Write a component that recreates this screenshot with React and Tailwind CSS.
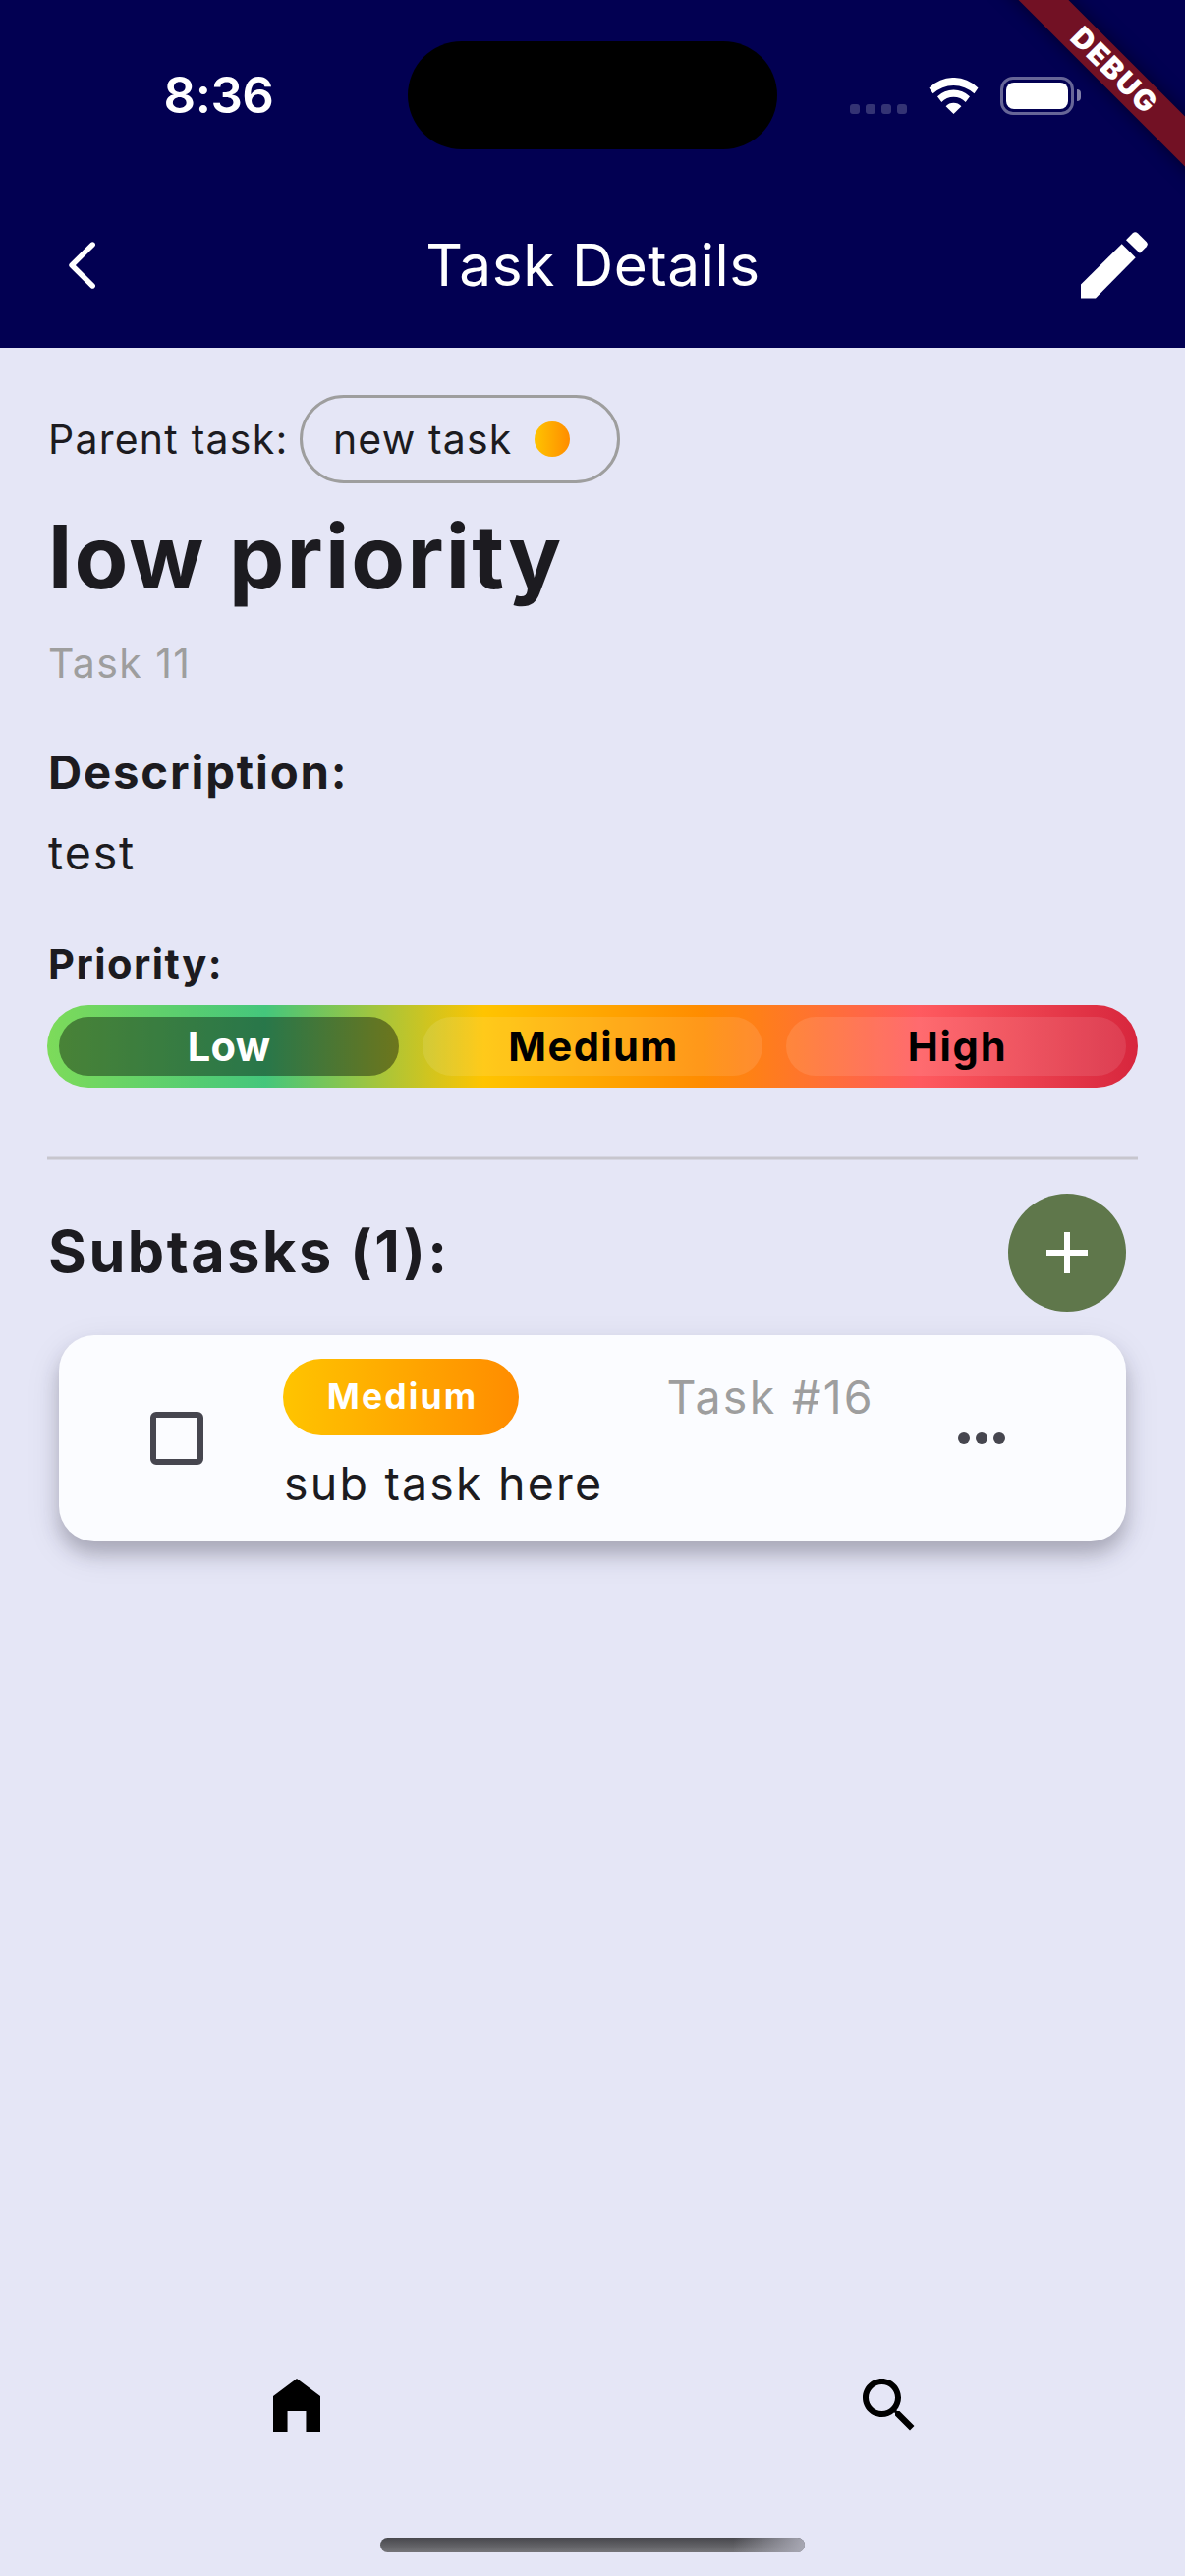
import React from "react";

function StatusBar() {
  return (
    <div className="flex h-[194px] items-center text-white">
      <div className="w-[415px] pl-[30px] text-center text-[51px] leading-[60px] font-semibold tracking-[-0.5px]">
        8:36
      </div>
      <div className="h-[110px] w-[376px] rounded-full bg-black" />
      <div className="ml-[74px] mt-7 flex gap-1.5">
        {[0, 1, 2, 3].map((i) => (
          <span key={i} className="size-2.5 rounded-[3px] bg-white/20" />
        ))}
      </div>
      <svg className="ml-[22px] h-[37px] w-[51px]" viewBox="0 0 50.4 37" fill="currentColor">
        <path d="M0.2 10.4A35.2 35.2 0 0 1 50.2 10.4L46.2 16.2A31 31 0 0 0 4.2 16.2Z" />
        <path d="M8.7 19.2A23.9 23.9 0 0 1 41.7 19.2L37.4 25A16.7 16.7 0 0 0 13 25Z" />
        <path d="M17.3 29.2A10.7 10.7 0 0 1 33.1 29.2L25.2 37Z" />
      </svg>
      <div className="ml-[22px] flex items-center gap-[3px]">
        <div className="h-[39px] w-[75px] rounded-[13px] border-[3px] border-white/40 p-[3px]">
          <div className="h-full w-full rounded-[8px] bg-white" />
        </div>
        <div className="h-3 w-1 rounded-r-full bg-white/50" />
      </div>
    </div>
  );
}

function DebugRibbon() {
  return (
    <div className="absolute top-0 right-0 size-[220px] overflow-hidden">
      <div className="absolute top-[54px] left-[-52px] flex h-9 w-[400px] rotate-45 items-center justify-center bg-[#721124] text-[29.5px] leading-none font-black tracking-[1.6px] text-white shadow-[0_0_18px_rgba(0,0,0,0.5)]">
        DEBUG
      </div>
    </div>
  );
}

function Header() {
  return (
    <header className="h-[354px] bg-[#020052]">
      <StatusBar />
      <div className="flex h-[152px] items-center justify-between pr-[38px] pl-[70px] text-white">
        <svg className="mr-[10px] h-[48px] w-[27px]" viewBox="0 0 27 48" fill="none" stroke="currentColor" strokeWidth="5.4" strokeLinecap="round" strokeLinejoin="round">
          <path d="M24.2 3L3 24L24.2 45" />
        </svg>
        <h1 className="text-[58.5px] leading-[72px] tracking-[0.57px]">Task Details</h1>
        <svg className="h-[68px] w-[68px]" viewBox="0 0 68 68" fill="currentColor">
          <path d="M0 53.5L41.7 12.2L55.7 26.2L15 67.5H0Z" />
          <path d="M46 8.2L52.6 1.5Q55.3 -1 58 1.5L66.6 10Q69 12.6 66.6 15.2L60 21.8Z" />
        </svg>
      </div>
    </header>
  );
}

function PriorityBar() {
  return (
    <div className="mt-[17px] grid h-[84px] grid-cols-3 gap-6 rounded-full bg-[linear-gradient(90deg,#7ddb5a_0%,#44c67c_20%,#ffc400_40%,#ff8c00_60%,#ff5a5f_80%,#d7263d_100%)] p-3 text-center text-[41.6px] leading-[60px] font-bold text-black">
      <div className="rounded-full bg-black/40 tracking-[0.3px] text-white">Low</div>
      <div className="rounded-full bg-white/10 pl-[2px] tracking-[1.4px]">Medium</div>
      <div className="rounded-full bg-white/10 pl-[3px] tracking-[1.8px]">High</div>
    </div>
  );
}

function SubtaskCard() {
  return (
    <div className="mx-3 mt-6 flex h-[210px] items-center rounded-[36px] bg-[#fbfcff] pl-[93px] shadow-[0_13px_18px_rgba(50,45,60,0.26),0_12px_36px_rgba(50,45,60,0.11)]">
      <div className="size-[54px] rounded-[6px] border-[6px] border-[#46464f]" />
      <div className="ml-[81px] h-full w-[602px] pt-6">
        <div className="flex h-[78px] items-center justify-between">
          <span className="flex h-full w-[240px] items-center justify-center rounded-full bg-[linear-gradient(90deg,#ffc400,#ff8c00)] pb-px pl-[3px] text-[35.5px] leading-[48px] font-bold tracking-[2.1px] text-white">
            Medium
          </span>
          <span className="text-[46.5px] leading-[58px] tracking-[2.3px] text-[#9e9e9e]">Task #16</span>
        </div>
        <div className="mt-5 pl-px text-[46.5px] leading-[58px] tracking-[2.2px]">sub task here</div>
      </div>
      <div className="ml-[85px] flex gap-1.5">
        {[0, 1, 2].map((i) => (
          <span key={i} className="size-3 rounded-full bg-[#46464f]" />
        ))}
      </div>
    </div>
  );
}

function BottomNav() {
  return (
    <nav className="mt-auto grid grid-cols-2 pb-[99px] text-black">
      <svg className="mx-auto size-[72px]" viewBox="0 0 24 24" fill="currentColor">
        <path d="M4 21V9L12 3L20 9V21H15.15V14H8.85V21Z" />
      </svg>
      <svg className="mx-auto size-[72px]" viewBox="0 0 24 24" fill="currentColor">
        <path d="M15.5 14h-.79l-.28-.27C15.41 12.59 16 11.11 16 9.5 16 5.91 13.09 3 9.5 3S3 5.91 3 9.5 5.91 16 9.5 16c1.61 0 3.09-.59 4.23-1.57l.27.28v.79l5 4.99L20.49 19l-4.99-5zm-6 0C7.01 14 5 11.99 5 9.5S7.01 5 9.5 5 14 7.01 14 9.5 11.99 14 9.5 14z" />
      </svg>
    </nav>
  );
}

export default function App() {
  return (
    <div className="relative flex h-[2622px] w-[1206px] flex-col overflow-hidden bg-[#e5e6f6] font-['Inter',sans-serif] text-[#1c1b20]">
      <Header />
      <main className="px-12 pt-12">
        <div className="flex h-[90px] items-center text-[41px] leading-[50px]">
          <span className="w-[257px] pl-px whitespace-nowrap tracking-[1.24px]">Parent task:</span>
          <div className="flex h-full w-[326px] items-center justify-between rounded-full border-[3px] border-[#9e9e9e] pr-12 pl-[31px]">
            <span className="tracking-[1.14px]">new task</span>
            <span className="size-9 rounded-full bg-[linear-gradient(90deg,#ffc400,#ff8c00)]" />
          </div>
        </div>
        <h2 className="mt-[21px] pl-px text-[89.5px] leading-[108px] font-bold tracking-[2.2px]">low priority</h2>
        <p className="mt-[29px] pl-px text-[41px] leading-[50px] tracking-[1.4px] text-[#9e9e9e]">Task 11</p>
        <h3 className="mt-[57px] pl-px text-[47.3px] leading-[58px] font-bold tracking-[1.85px]">Description:</h3>
        <p className="mt-6 pl-px text-[46.5px] leading-[58px] tracking-[1.9px]">test</p>
        <h3 className="mt-[59px] pl-px text-[41.6px] leading-[50px] font-bold tracking-[1.5px]">Priority:</h3>
        <PriorityBar />
        <div className="mt-[70px] h-1 border-y border-[#d6d6e2] bg-[#c7c6ce]" />
        <div className="mt-[34px] flex h-[120px] items-center justify-between pr-3 pl-px">
          <h2 className="pb-[3px] text-[59.3px] leading-[72px] font-bold tracking-[2.55px]">Subtasks (1):</h2>
          <button className="flex size-[120px] items-center justify-center rounded-full bg-[#5f774b]">
            <svg className="size-[42px]" viewBox="0 0 42 42" stroke="#fff" strokeWidth="6">
              <path d="M21 0V42M0 21H42" />
            </svg>
          </button>
        </div>
        <SubtaskCard />
      </main>
      <BottomNav />
      <div className="mx-auto mb-6 h-[15px] w-[432px] overflow-hidden rounded-full bg-[linear-gradient(180deg,#48484d,#757579)]">
        <div className="ml-auto h-full w-[72px] bg-[linear-gradient(100deg,transparent,#a9a9b5)]" />
      </div>
      <DebugRibbon />
    </div>
  );
}
